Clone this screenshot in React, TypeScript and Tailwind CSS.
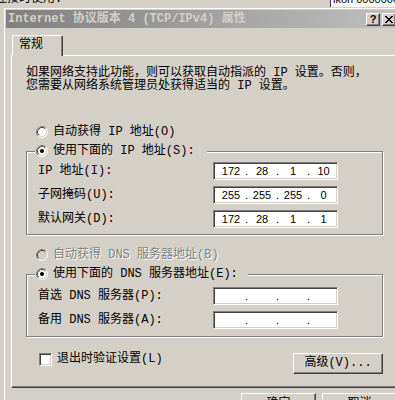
// TCP/IPv4 属性 - classic Windows property dialog

import React from 'react'

const raised =
  'border border-t-white border-l-white border-r-[#404040] border-b-[#404040] shadow-[inset_-1px_-1px_0_#808080]'
const sunken =
  'border border-t-[#808080] border-l-[#808080] border-r-white border-b-white shadow-[inset_1px_1px_0_#404040,inset_-1px_-1px_0_#d4d0c8]'

function Radio({ checked = false, disabled = false }: { checked?: boolean; disabled?: boolean }) {
  return (
    <svg width="12" height="12" viewBox="0 0 12 12" className="shrink-0">
      <circle cx="6" cy="6" r="5" fill={disabled ? '#d4d0c8' : '#fff'} />
      <path d="M2.11 9.89A5.5 5.5 0 0 1 9.89 2.11" stroke="#808080" fill="none" />
      <path d="M9.89 2.11A5.5 5.5 0 0 1 2.11 9.89" stroke="#fff" fill="none" />
      <path d="M2.82 9.18A4.5 4.5 0 0 1 9.18 2.82" stroke="#404040" fill="none" />
      <path d="M9.18 2.82A4.5 4.5 0 0 1 2.82 9.18" stroke="#d4d0c8" fill="none" />
      {checked && <circle cx="6" cy="6" r="2" fill="#000" />}
    </svg>
  )
}

function Button({ children, className = '' }: { children: React.ReactNode; className?: string }) {
  return (
    <div className={`flex items-center justify-center bg-[#d4d0c8] shrink-0 ${raised} ${className}`}>
      {children}
    </div>
  )
}

function IpField({ parts = ['', '', '', ''] }: { parts?: string[] }) {
  return (
    <div
      className={`w-[125px] h-[18px] bg-white flex items-center pl-[3px] font-['Liberation_Sans',sans-serif] text-[11px] leading-[13px] ${sunken}`}
    >
      {parts.map((v, i) => (
        <React.Fragment key={i}>
          <span className={i < 3 ? 'w-[28px] shrink-0 text-center' : 'flex-1 text-center'}>{v}</span>
          {i < 3 && <span className="w-[3px] shrink-0">.</span>}
        </React.Fragment>
      ))}
    </div>
  )
}

function Row({ label, value }: { label: string; value?: string[] }) {
  return (
    <div className="flex items-center h-[18px] pl-[11px]">
      <span className="w-[175px] shrink-0 whitespace-nowrap">{label}</span>
      <IpField parts={value} />
    </div>
  )
}

export default function App() {
  return (
    <div className="relative w-[395px] h-[400px] overflow-hidden bg-[#d4d0c8] font-['Liberation_Mono','Noto_Sans_CJK_SC',monospace] text-[12px] leading-[13px] text-black">
      {/* window behind the dialog */}
      <div className="absolute left-[-5px] top-[-7px] whitespace-nowrap">连接时使用:</div>
      <div className="absolute left-[330px] top-0 w-[70px] h-[7px] bg-white border-l border-[#404040] overflow-hidden">
        <div className="mt-[-7px] pl-[2px] font-['Liberation_Sans',sans-serif] text-[11px] leading-[13px] whitespace-nowrap">
          ikon 0000000
        </div>
      </div>

      {/* dialog window */}
      <div className="absolute left-[4px] top-[8px] w-[396px] h-[400px] bg-[#d4d0c8] border-t border-l border-white p-[1px]">
        {/* title bar */}
        <div className="w-[392px] h-[18px] flex items-center bg-linear-to-r from-[#808080] to-[#c0c0c0] pl-[2px] pr-[2px]">
          <span className="font-bold text-[#d4d0c8] whitespace-nowrap">Internet 协议版本 4 (TCP/IPv4) 属性</span>
          <div className="ml-auto flex gap-[2px]">
            <Button className="w-[14px] h-[13px] font-['Liberation_Sans',sans-serif] font-bold text-[11px] leading-none">
              ?
            </Button>
            <Button className="w-[14px] h-[13px]">
              <svg width="8" height="7" viewBox="0 0 8 7">
                <path d="M0 0L7 7M1 0L8 7M7 0L0 7M8 0L1 7" stroke="#000" strokeWidth="1" />
              </svg>
            </Button>
          </div>
        </div>

        {/* client area */}
        <div className="pt-[7px] pl-[5px]">
          {/* tabs */}
          <div className="h-[20px] flex">
            <div className="relative z-10 ml-[1px] w-[51px] h-[21px] bg-[#d4d0c8] rounded-tl-[2px] rounded-tr-[2px] border-t border-l border-r border-t-white border-l-white border-r-[#404040] shadow-[inset_-1px_0_0_#808080] pl-[6px] pt-[3px]">
              常规
            </div>
          </div>

          {/* tab page */}
          <div className="w-[386px] h-[333px] border border-t-white border-l-white border-r-[#404040] border-b-[#404040] shadow-[inset_-1px_-1px_0_#808080] pl-[14px] pt-[11px]">
            <p className="whitespace-nowrap">
              如果网络支持此功能，则可以获取自动指派的 IP 设置。否则，
              <br />
              您需要从网络系统管理员处获得适当的 IP 设置。
            </p>

            <div className="mt-[31px] h-[16px] flex items-center gap-[5px] pl-[10px]">
              <Radio />
              <span>自动获得 IP 地址(O)</span>
            </div>

            <fieldset className="mt-[3px] w-[357px] border border-[#808080] shadow-[1px_1px_0_#fff,inset_1px_1px_0_#fff]">
              <legend className="ml-[8px] pl-[1px] pr-[12px] bg-[#d4d0c8]">
                <div className="h-[16px] flex items-center gap-[5px]">
                  <Radio checked />
                  <span className="whitespace-nowrap">使用下面的 IP 地址(S):</span>
                </div>
              </legend>
              <div className="pt-[3px] pb-[6px] flex flex-col gap-[6px]">
                <Row label="IP 地址(I):" value={['172', '28', '1', '10']} />
                <Row label="子网掩码(U):" value={['255', '255', '255', '0']} />
                <Row label="默认网关(D):" value={['172', '28', '1', '1']} />
              </div>
            </fieldset>

            <div className="mt-[12px] h-[16px] flex items-center gap-[5px] pl-[10px]">
              <Radio disabled />
              <span className="text-[#808080] [text-shadow:1px_1px_0_#fff]">自动获得 DNS 服务器地址(B)</span>
            </div>

            <fieldset className="mt-[3px] w-[357px] border border-[#808080] shadow-[1px_1px_0_#fff,inset_1px_1px_0_#fff]">
              <legend className="ml-[8px] pl-[1px] pr-[10px] bg-[#d4d0c8]">
                <div className="h-[16px] flex items-center gap-[5px]">
                  <Radio checked />
                  <span className="whitespace-nowrap">使用下面的 DNS 服务器地址(E):</span>
                </div>
              </legend>
              <div className="pt-[5px] pb-[7px] flex flex-col gap-[6px]">
                <Row label="首选 DNS 服务器(P):" />
                <Row label="备用 DNS 服务器(A):" />
              </div>
            </fieldset>

            <div className="mt-[16px] w-[357px] flex items-start justify-between">
              <div className="h-[13px] flex items-center gap-[5px] pl-[13px]">
                <span className={`w-[13px] h-[13px] bg-white shrink-0 ${sunken}`} />
                <span className="whitespace-nowrap">退出时验证设置(L)</span>
              </div>
              <Button className="w-[90px] h-[21px]">高级(V)...</Button>
            </div>
          </div>

          {/* dialog buttons */}
          <div className="w-[386px] mt-[5px] flex justify-end gap-[6px]">
            <Button className="w-[75px] h-[23px]">确定</Button>
            <Button className="w-[75px] h-[23px]">取消</Button>
          </div>
        </div>
      </div>
    </div>
  )
}
